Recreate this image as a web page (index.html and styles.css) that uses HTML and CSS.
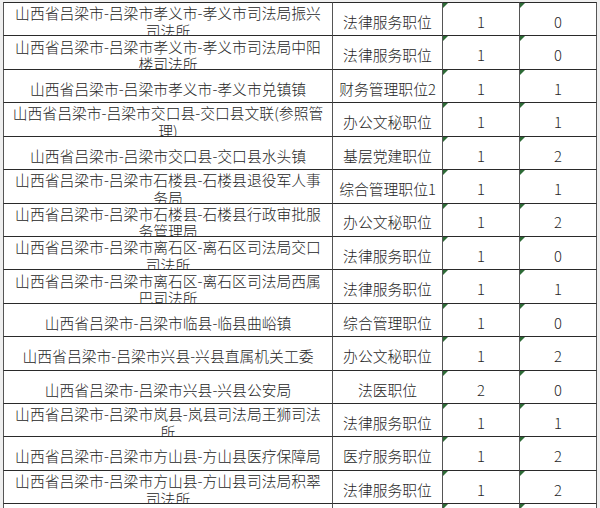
FILE: index.html
```html
<!DOCTYPE html>
<html lang="zh">
<head>
<meta charset="utf-8">
<title>吕梁市职位表</title>
<link rel="stylesheet" href="styles.css">
</head>
<body>
<div class="sheet">
  <div class="cell name">山西省吕梁市-吕梁市孝义市-孝义市司法局振兴<br>司法所</div>
  <div class="cell">法律服务职位</div>
  <div class="cell num">1</div>
  <div class="cell num last">0</div>

  <div class="cell name">山西省吕梁市-吕梁市孝义市-孝义市司法局中阳<br>楼司法所</div>
  <div class="cell">法律服务职位</div>
  <div class="cell num">1</div>
  <div class="cell num last">0</div>

  <div class="cell name">山西省吕梁市-吕梁市孝义市-孝义市兑镇镇</div>
  <div class="cell">财务管理职位2</div>
  <div class="cell num">1</div>
  <div class="cell num last">1</div>

  <div class="cell name">山西省吕梁市-吕梁市交口县-交口县文联(参照管<br>理)</div>
  <div class="cell">办公文秘职位</div>
  <div class="cell num">1</div>
  <div class="cell num last">1</div>

  <div class="cell name">山西省吕梁市-吕梁市交口县-交口县水头镇</div>
  <div class="cell">基层党建职位</div>
  <div class="cell num">1</div>
  <div class="cell num last">2</div>

  <div class="cell name">山西省吕梁市-吕梁市石楼县-石楼县退役军人事<br>务局</div>
  <div class="cell">综合管理职位1</div>
  <div class="cell num">1</div>
  <div class="cell num last">1</div>

  <div class="cell name">山西省吕梁市-吕梁市石楼县-石楼县行政审批服<br>务管理局</div>
  <div class="cell">办公文秘职位</div>
  <div class="cell num">1</div>
  <div class="cell num last">2</div>

  <div class="cell name">山西省吕梁市-吕梁市离石区-离石区司法局交口<br>司法所</div>
  <div class="cell">法律服务职位</div>
  <div class="cell num">1</div>
  <div class="cell num last">0</div>

  <div class="cell name">山西省吕梁市-吕梁市离石区-离石区司法局西属<br>巴司法所</div>
  <div class="cell">法律服务职位</div>
  <div class="cell num">1</div>
  <div class="cell num last">1</div>

  <div class="cell name">山西省吕梁市-吕梁市临县-临县曲峪镇</div>
  <div class="cell">综合管理职位</div>
  <div class="cell num">1</div>
  <div class="cell num last">0</div>

  <div class="cell name">山西省吕梁市-吕梁市兴县-兴县直属机关工委</div>
  <div class="cell">办公文秘职位</div>
  <div class="cell num">1</div>
  <div class="cell num last">2</div>

  <div class="cell name">山西省吕梁市-吕梁市兴县-兴县公安局</div>
  <div class="cell">法医职位</div>
  <div class="cell num">2</div>
  <div class="cell num last">0</div>

  <div class="cell name">山西省吕梁市-吕梁市岚县-岚县司法局王狮司法<br>所</div>
  <div class="cell">法律服务职位</div>
  <div class="cell num">1</div>
  <div class="cell num last">1</div>

  <div class="cell name">山西省吕梁市-吕梁市方山县-方山县医疗保障局</div>
  <div class="cell">医疗服务职位</div>
  <div class="cell num">1</div>
  <div class="cell num last">2</div>

  <div class="cell name">山西省吕梁市-吕梁市方山县-方山县司法局积翠<br>司法所</div>
  <div class="cell">法律服务职位</div>
  <div class="cell num">1</div>
  <div class="cell num last">2</div>

  <div class="cell name"></div>
  <div class="cell"></div>
  <div class="cell num"></div>
  <div class="cell num last"></div>
</div>
</body>
</html>
```

FILE: styles.css
```css
html, body {
  margin: 0;
  padding: 0;
  background: #efefef;
  height: 508px;
  overflow: hidden;
}

.sheet {
  margin: 2px 0 0 3px;
  width: 594px;
  display: grid;
  grid-template-columns: 329px 110px 77px 78px;
  grid-auto-rows: 33.43px;
  background: #ffffff;
  font-family: "Noto Sans CJK SC", "Noto Sans", sans-serif;
  font-size: 14.8px;
  font-weight: 300;
  line-height: 17.5px;
  color: #262626;
}

.cell {
  position: relative;
  box-sizing: border-box;
  border-top: 1px solid #2a2a2a;
  border-left: 1px solid #555555;
  padding-top: 5px;
  overflow: hidden;
  display: flex;
  flex-direction: column;
  justify-content: center;
  align-items: center;
  text-align: center;
  white-space: nowrap;
}

.cell.last {
  border-right: 1px solid #555555;
}

.num::before {
  content: "";
  position: absolute;
  top: 0;
  left: 0;
  width: 0;
  height: 0;
  border-top: 5px solid #2d6b36;
  border-right: 5px solid transparent;
}
```
